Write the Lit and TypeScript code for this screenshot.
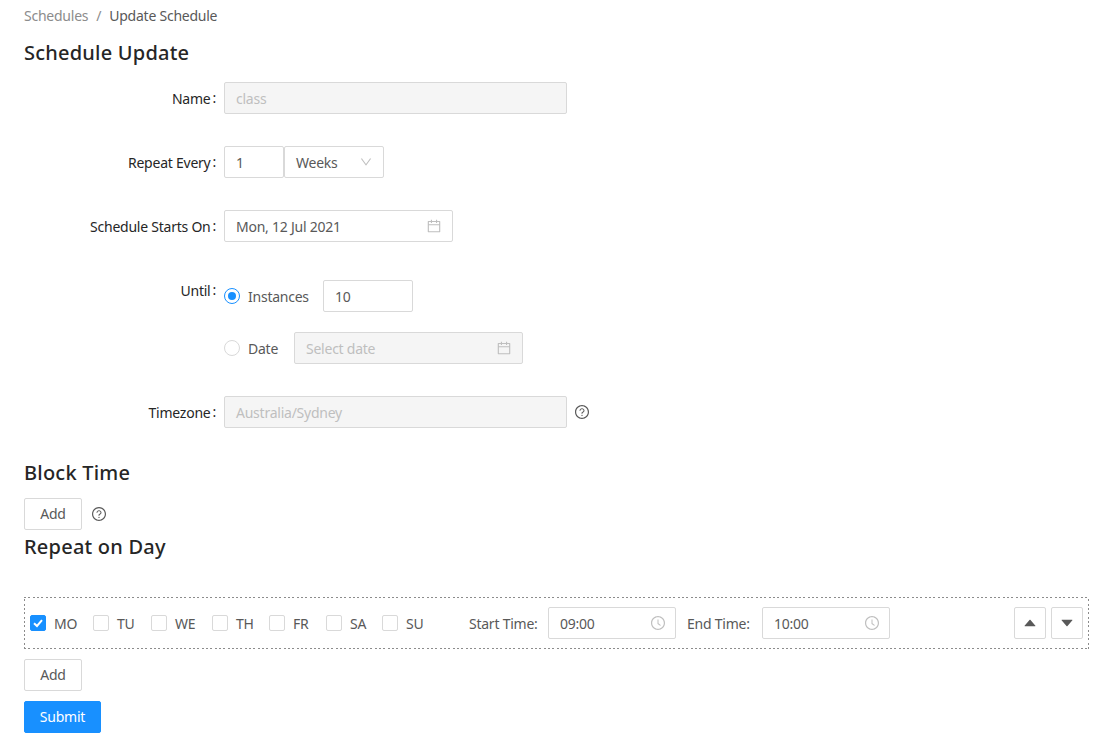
import { LitElement, html, css, svg } from "lit";
import { customElement } from "lit/decorators.js";

const calendar = svg`<path d="M880 184H712v-64c0-4.4-3.6-8-8-8h-56c-4.4 0-8 3.6-8 8v64H384v-64c0-4.4-3.6-8-8-8h-56c-4.4 0-8 3.6-8 8v64H144c-17.7 0-32 14.3-32 32v664c0 17.7 14.3 32 32 32h736c17.7 0 32-14.3 32-32V216c0-17.7-14.3-32-32-32zm-40 656H184V460h656v380zM184 392V256h128v48c0 4.4 3.6 8 8 8h56c4.4 0 8-3.6 8-8v-48h256v48c0 4.4 3.6 8 8 8h56c4.4 0 8-3.6 8-8v-48h128v136H184z"/>`;
const clock = svg`<path d="M512 64C264.6 64 64 264.6 64 512s200.6 448 448 448 448-200.6 448-448S759.4 64 512 64zm0 820c-205.4 0-372-166.6-372-372s166.6-372 372-372 372 166.6 372 372-166.6 372-372 372z"/><path d="M686.7 638.6L544.1 535.5V288c0-4.4-3.6-8-8-8H488c-4.4 0-8 3.6-8 8v275.4c0 2.6 1.2 5 3.3 6.5l165.4 120.6c3.6 2.6 8.6 1.8 11.2-1.7l28.6-39c2.6-3.7 1.8-8.7-1.8-11.2z"/>`;
const question = svg`<path d="M512 64C264.6 64 64 264.6 64 512s200.6 448 448 448 448-200.6 448-448S759.4 64 512 64zm0 820c-205.4 0-372-166.6-372-372s166.6-372 372-372 372 166.6 372 372-166.6 372-372 372z"/><path d="M623.6 316.7C593.6 290.4 554 276 512 276s-81.6 14.5-111.6 40.7C369.2 344 352 380.7 352 420v7.6c0 4.4 3.6 8 8 8h48c4.4 0 8-3.6 8-8V420c0-44.1 43.1-80 96-80s96 35.9 96 80c0 31.1-22 59.6-56.1 72.7-21.2 8.1-39.2 22.3-52.1 40.9-13.1 19-19.9 41.8-19.9 64.9V620c0 4.4 3.6 8 8 8h48c4.4 0 8-3.6 8-8v-22.7a48.3 48.3 0 0 1 30.9-44.8c59-22.7 97.1-74.7 97.1-132.5.1-39.3-17.1-76-48.3-103.3zM472 732a40 40 0 1 0 80 0 40 40 0 1 0-80 0z"/>`;
const down = svg`<path d="M884 256h-75c-5.1 0-9.9 2.5-12.9 6.6L512 654.2 227.9 262.6c-3-4.1-7.8-6.6-12.9-6.6h-75c-6.5 0-10.3 7.4-6.5 12.7l352.6 486.1c12.8 17.6 39 17.6 51.7 0l352.6-486.1c3.9-5.3.1-12.7-6.4-12.7z"/>`;
const caretUp = svg`<path d="M858.9 689L530.5 308.2c-9.4-10.9-27.5-10.9-37 0L165.1 689c-12.2 14.2-1.2 35 18.5 35h656.8c19.7 0 30.7-20.8 18.5-35z"/>`;
const caretDown = svg`<path d="M840.4 300H183.6c-19.7 0-30.7 20.8-18.5 35l328.4 380.8c9.4 10.9 27.5 10.9 37 0L858.9 335c12.2-14.2 1.2-35-18.5-35z"/>`;

const icon = (p: unknown, cls: string) =>
  html`<svg class="icon ${cls}" viewBox="64 64 896 896" fill="currentColor">${p}</svg>`;

const days = [
  { d: "MO", w: 63, on: true },
  { d: "TU", w: 58, on: false },
  { d: "WE", w: 61, on: false },
  { d: "TH", w: 57, on: false },
  { d: "FR", w: 57, on: false },
  { d: "SA", w: 56, on: false },
  { d: "SU", w: 87, on: false },
];

@customElement("app-root")
export class AppRoot extends LitElement {
  static styles = css`
    :host {
      display: block;
      box-sizing: border-box;
      height: 741px;
      overflow: hidden;
      background: #fff;
      padding: 5px 18px 0 24px;
      font-family: "Noto Sans", sans-serif;
      font-size: 14px;
      line-height: 22px;
      letter-spacing: -0.24px;
      color: #595959;
    }
    * { box-sizing: border-box; }
    .crumbs { display: flex; height: 22px; }
    .crumbs .muted { color: #8c8c8c; }
    .crumbs .sep { color: #8c8c8c; margin: 0 8px; }
    h2 {
      margin: 0;
      font-size: 20px;
      line-height: 28px;
      font-weight: 500;
      letter-spacing: 0.22px;
      color: #262626;
    }
    .title { margin-top: 12px; margin-bottom: 15px; }
    .row { display: flex; margin-bottom: 32px; }
    .t { padding-top: 2px; }
    .label {
      width: 192px;
      flex: none;
      height: 32px;
      display: flex;
      align-items: center;
      justify-content: flex-end;
      color: #262626;
    }
    .label i { font-style: normal; margin: 0 0 0 2px; }
    .control { margin-left: 8px; display: flex; align-items: center; }
    .field {
      height: 32px;
      border: 1px solid #d9d9d9;
      border-radius: 2px;
      padding: 0 11px;
      display: flex;
      align-items: center;
      justify-content: space-between;
      background: #fff;
      color: #595959;
      flex: none;
    }
    .field.off { background: #f5f5f5; color: #bfbfbf; }
    .field.time { padding-right: 10px; }
    .w343 { width: 343px; }
    .w60 { width: 60px; }
    .w100 { width: 100px; }
    .w229 { width: 229px; }
    .w90 { width: 90px; }
    .w128 { width: 128px; }
    .icon { width: 14px; height: 14px; flex: none; color: #bfbfbf; }
    .small { width: 12px; height: 12px; }
    .help { color: #595959; margin-left: 8px; }
    .until { display: flex; flex-direction: column; gap: 20px; padding-top: 6px; margin-left: 8px; }
    .until .line { display: flex; align-items: center; }
    .radio {
      width: 16px;
      height: 16px;
      border-radius: 50%;
      border: 1px solid #d9d9d9;
      background: #fff;
      margin-right: 8px;
      display: flex;
      align-items: center;
      justify-content: center;
      flex: none;
    }
    .radio.on { border-color: #1890ff; }
    .radio.on::after {
      content: "";
      width: 8px;
      height: 8px;
      border-radius: 50%;
      background: #1890ff;
    }
    .inst { width: 75px; white-space: nowrap; }
    .dt { width: 46px; }
    .block { margin-top: -1px; margin-bottom: 11px; }
    .btn {
      height: 32px;
      border: 1px solid #d9d9d9;
      border-radius: 2px;
      background: #fff;
      color: #595959;
      font: inherit;
      letter-spacing: inherit;
      padding: 0;
      display: flex;
      align-items: center;
      justify-content: center;
      flex: none;
    }
    .add { width: 58px; }
    .addrow { display: flex; align-items: center; }
    .addrow .help { margin-left: 10px; }
    .repeat { margin-top: 3px; margin-bottom: 36px; }
    .box {
      height: 52px;
      display: flex;
      align-items: center;
      padding: 0 6px;
      background-image:
        repeating-linear-gradient(90deg, #8c8c8c 0 2px, transparent 2px 4.33px),
        repeating-linear-gradient(90deg, #8c8c8c 0 2px, transparent 2px 4.33px),
        repeating-linear-gradient(0deg, #8c8c8c 0 2px, transparent 2px 4.33px),
        repeating-linear-gradient(0deg, #8c8c8c 0 2px, transparent 2px 4.33px);
      background-size: 100% 1px, 100% 1px, 1px 100%, 1px 100%;
      background-position: 0 0, 0 100%, 0 0, 100% 0;
      background-repeat: no-repeat;
    }
    .day { display: flex; align-items: center; flex: none; }
    .check {
      width: 16px;
      height: 16px;
      border: 1px solid #d9d9d9;
      border-radius: 2px;
      margin-right: 8px;
      flex: none;
      display: flex;
      align-items: center;
      justify-content: center;
    }
    .check.on { background: #1890ff; border-color: #1890ff; }
    .check svg { width: 12px; height: 12px; }
    .tl { width: 79px; flex: none; white-space: nowrap; }
    .tl.e { margin-left: 11px; width: 75px; }
    .spacer { flex: 1; }
    .sq { width: 32px; }
    .sq .icon { color: #595959; width: 14px; height: 14px; }
    .sq + .sq { margin-left: 5px; }
    .add2 { margin-top: 10px; }
    .submit {
      margin-top: 10px;
      width: 77px;
      background: #1890ff;
      border-color: #1890ff;
      color: #fff;
    }
  `;

  render() {
    return html`
      <div class="crumbs"><span class="muted">Schedules</span><span class="sep">/</span><span>Update Schedule</span></div>
      <h2 class="title">Schedule Update</h2>

      <div class="row">
        <div class="label"><span class="t">Name</span><i>:</i></div>
        <div class="control"><div class="field off w343"><span class="t">class</span></div></div>
      </div>
      <div class="row">
        <div class="label"><span class="t">Repeat Every</span><i>:</i></div>
        <div class="control">
          <div class="field w60"><span class="t">1</span></div>
          <div class="field w100"><span class="t">Weeks</span> ${icon(down, "small")}</div>
        </div>
      </div>
      <div class="row">
        <div class="label"><span class="t">Schedule Starts On</span><i>:</i></div>
        <div class="control"><div class="field w229"><span class="t">Mon, 12 Jul 2021</span> ${icon(calendar, "")}</div></div>
      </div>
      <div class="row">
        <div class="label"><span class="t">Until</span><i>:</i></div>
        <div class="until">
          <div class="line">
            <span class="radio on"></span><span class="inst t">Instances</span>
            <div class="field w90"><span class="t">10</span></div>
          </div>
          <div class="line">
            <span class="radio"></span><span class="dt t">Date</span>
            <div class="field off w229"><span class="t">Select date</span> ${icon(calendar, "")}</div>
          </div>
        </div>
      </div>
      <div class="row">
        <div class="label"><span class="t">Timezone</span><i>:</i></div>
        <div class="control">
          <div class="field off w343"><span class="t">Australia/Sydney</span></div>
          ${icon(question, "help")}
        </div>
      </div>

      <h2 class="block">Block Time</h2>
      <div class="addrow">
        <button class="btn add">Add</button>
        ${icon(question, "help")}
      </div>
      <h2 class="repeat">Repeat on Day</h2>

      <div class="box">
        ${days.map(
          (x) => html`<div class="day" style="width:${x.w}px">
            <span class="check ${x.on ? "on" : ""}">
              ${x.on
                ? html`<svg viewBox="0 0 12 12" fill="none" stroke="#fff" stroke-width="2"><path d="M2 6.2 5 9 10 3.2" /></svg>`
                : ""}
            </span>
            <span class="t">${x.d}</span>
          </div>`
        )}
        <span class="tl t">Start Time:</span>
        <div class="field time w128"><span class="t">09:00</span> ${icon(clock, "")}</div>
        <span class="tl e t">End Time:</span>
        <div class="field time w128"><span class="t">10:00</span> ${icon(clock, "")}</div>
        <span class="spacer"></span>
        <button class="btn sq">${icon(caretUp, "")}</button>
        <button class="btn sq">${icon(caretDown, "")}</button>
      </div>

      <button class="btn add add2">Add</button>
      <button class="btn submit">Submit</button>
    `;
  }
}
